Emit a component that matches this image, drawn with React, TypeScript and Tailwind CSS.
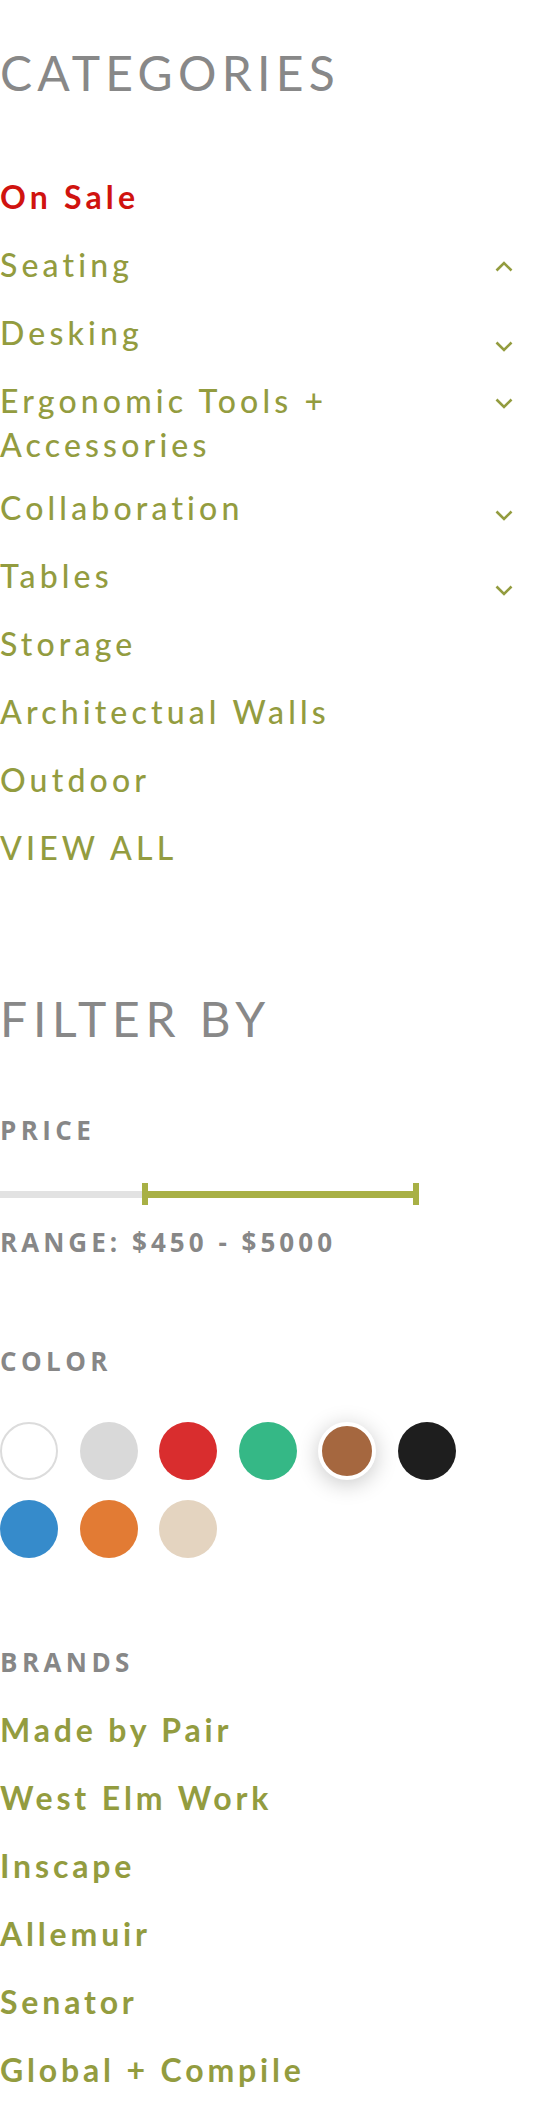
import React from "react";

const olive = "text-[#939c3f]";

const categorias = [
  { label: "On Sale", sale: true },
  { label: "Seating", chevron: "up", chevronClass: "mt-[18px]" },
  { label: "Desking", chevron: "down", chevronClass: "mt-[30px]" },
  { label: "Ergonomic Tools + Accessories", chevron: "down", chevronClass: "mt-[19px]" },
  { label: "Collaboration", chevron: "down", chevronClass: "mt-[24px]", itemClass: "-mt-[5px]" },
  { label: "Tables", chevron: "down", chevronClass: "mt-[31px]" },
  { label: "Storage" },
  { label: "Architectual Walls" },
  { label: "Outdoor" },
  { label: "VIEW ALL" },
];

const colores = [
  { name: "white", className: "bg-white border-2 border-[#dcdcdc]" },
  { name: "gray", className: "bg-[#d9d9d9]" },
  { name: "red", className: "bg-[#d92d2e]" },
  { name: "green", className: "bg-[#35b886]" },
  {
    name: "brown",
    className: "bg-[#a5673f] border-[4px] border-white shadow-[0_4px_22px_rgba(0,0,0,0.22)]",
  },
  { name: "black", className: "bg-[#1e1e1e]" },
  { name: "blue", className: "bg-[#368bcb]" },
  { name: "orange", className: "bg-[#e27b34]" },
  { name: "beige", className: "bg-[#e4d4c0]" },
];

const marcas = [
  "Made by Pair",
  "West Elm Work",
  "Inscape",
  "Allemuir",
  "Senator",
  "Global + Compile",
];

function Chevron({ up }: { up?: boolean }) {
  return (
    <svg viewBox="0 0 18 11" className="w-[18px] h-[11px] text-[#939c3f]" fill="none">
      <polyline
        points={up ? "1.5,9.5 9,2 16.5,9.5" : "1.5,1.5 9,9 16.5,1.5"}
        stroke="currentColor"
        strokeWidth="2.6"
      />
    </svg>
  );
}

function Subtitulo({ children, className = "" }: { children: React.ReactNode; className?: string }) {
  return (
    <h3
      className={`font-['Open_Sans',sans-serif] font-bold text-[26px] leading-[32px] tracking-[0.17em] text-[#878787] ${className}`}
    >
      {children}
    </h3>
  );
}

export default function App() {
  return (
    <div className="w-[560px] min-h-[2102px] bg-white font-['Lato',sans-serif]">
      <div className="w-[513px] pt-[49px]">
        {/* Categorías */}
        <h2 className="text-[48px] leading-[48px] font-normal tracking-[0.11em] text-[#888888]">
          CATEGORIES
        </h2>
        <ul className="mt-[78px] flex flex-col gap-6">
          {categorias.map((cat) => (
            <li key={cat.label} className={`flex justify-between items-start ${cat.itemClass ?? ""}`}>
              <a
                className={`text-[32px] leading-[44px] tracking-[0.13em] max-w-[440px] ${
                  cat.sale ? "text-[#d0130f] font-bold tracking-[0.12em]" : `${olive} font-medium`
                }`}
              >
                {cat.label}
              </a>
              {cat.chevron && (
                <span className={cat.chevronClass}>
                  <Chevron up={cat.chevron === "up"} />
                </span>
              )}
            </li>
          ))}
        </ul>

        {/* Filtros */}
        <h2 className="mt-[125px] text-[48px] leading-[48px] font-normal tracking-[0.12em] text-[#888888]">
          FILTER BY
        </h2>

        <Subtitulo className="mt-[71px]">PRICE</Subtitulo>
        <div className="mt-[36px] flex items-center w-[419px] h-6">
          <div className="w-[142px] h-[7px] bg-[#e2e2e2]" />
          <div className="w-[6px] h-[22px] bg-[#a8b045]" />
          <div className="flex-1 h-[7px] bg-[#a8b045]" />
          <div className="w-[6px] h-[22px] bg-[#a8b045]" />
        </div>
        <p className="mt-[20px] font-['Open_Sans',sans-serif] font-bold text-[26px] leading-[32px] tracking-[0.155em] text-[#878787]">
          RANGE: $450 - $5000
        </p>

        <Subtitulo className="mt-[87px]">COLOR</Subtitulo>
        <div className="mt-[45px] grid grid-cols-[repeat(6,58px)] gap-x-[21.5px] gap-y-5">
          {colores.map((c) => (
            <button key={c.name} aria-label={c.name} className={`w-[58px] h-[58px] rounded-full ${c.className}`} />
          ))}
        </div>

        <Subtitulo className="mt-[88px]">BRANDS</Subtitulo>
        <ul className="mt-[30px] flex flex-col gap-6">
          {marcas.map((m) => (
            <li key={m}>
              <a className={`text-[32px] leading-[44px] tracking-[0.12em] font-bold ${olive}`}>{m}</a>
            </li>
          ))}
        </ul>
      </div>
    </div>
  );
}
